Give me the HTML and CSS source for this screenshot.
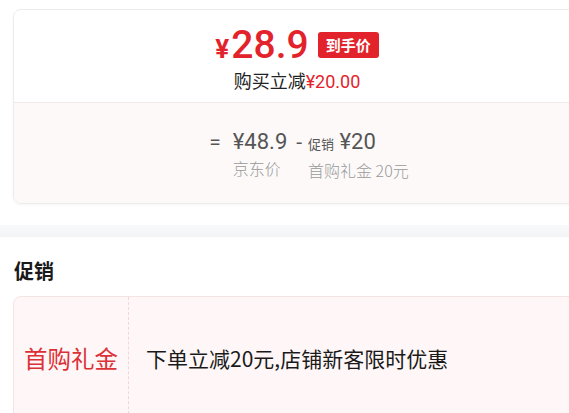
FILE: index.html
```html
<!DOCTYPE html>
<html lang="zh-CN">
<head>
    <meta charset="UTF-8">
    <meta name="viewport" content="width=device-width, initial-scale=1.0">
    <title>到手价</title>
    <link rel="stylesheet" href="styles.css">
</head>
<body>

<div class="price-card">
    <div class="price-top">
        <div class="price-row">
            <span class="yen">¥</span><span class="num">28.9</span>
            <span class="badge">到手价</span>
        </div>
        <div class="save">购买立减<span class="red">¥20.00</span></div>
    </div>
    <div class="price-calc">
        <span class="op">=</span>
        <div class="col">
            <div class="val">¥48.9</div>
            <div class="lbl">京东价</div>
        </div>
        <span class="op op-minus">-</span>
        <div class="col">
            <div class="val"><span class="tag">促销</span> ¥20</div>
            <div class="lbl">首购礼金 20元</div>
        </div>
    </div>
</div>

<div class="band"></div>

<h3 class="section-title">促销</h3>

<div class="promo">
    <div class="promo-name">首购礼金</div>
    <div class="promo-text">下单立减20元,店铺新客限时优惠</div>
</div>

</body>
</html>
```

FILE: styles.css
```css
html, body {
    margin: 0;
    padding: 0;
    overflow: hidden;
}
body {
    width: 600px;
    background-color: #fff;
    font-family: Roboto, "Noto Sans CJK SC", sans-serif;
    color: #222;
}
.price-card {
    width: 566px;
    margin: 9px 0 0 13px;
    border: 1px solid #ececec;
    border-radius: 8px;
    overflow: hidden;
    box-shadow: 0 1px 3px rgba(0, 0, 0, 0.04);
}
.price-top {
    height: 93px;
    padding-top: 15px;
    box-sizing: border-box;
    border-bottom: 1px solid #f0eaea;
}
.price-row {
    display: flex;
    justify-content: center;
    align-items: baseline;
    height: 40px;
    color: #e3232c;
}
.yen {
    font-size: 26px;
    font-weight: bold;
    margin-right: 2px;
}
.num {
    font-size: 39px;
    line-height: 40px;
    font-weight: 500;
}
.badge {
    align-self: center;
    margin-left: 9px;
    padding: 0 8px;
    height: 26px;
    line-height: 26px;
    background-color: #e3232c;
    color: #fff;
    font-size: 15px;
    font-weight: bold;
    border-radius: 3px;
    font-family: "Noto Sans CJK SC", sans-serif;
}
.save {
    margin-top: 3px;
    text-align: center;
    font-size: 18px;
    line-height: 24px;
    color: #222;
    font-family: "Noto Sans CJK SC", sans-serif;
}
.red {
    color: #e3232c;
    font-family: Roboto, sans-serif;
}
.price-calc {
    display: flex;
    justify-content: center;
    align-items: flex-start;
    height: 100px;
    padding: 25px 0 0 24px;
    box-sizing: border-box;
    background-color: #fdf9f9;
    color: #555;
}
.op {
    font-size: 21px;
    line-height: 28px;
    margin-right: 12px;
}
.op-minus {
    margin: 0 6px 0 9px;
}
.val {
    font-size: 22px;
    line-height: 28px;
    white-space: nowrap;
}
.tag {
    font-size: 13px;
    font-family: "Noto Sans CJK SC", sans-serif;
}
.lbl {
    margin-top: 1px;
    font-size: 16px;
    line-height: 22px;
    color: #999;
    white-space: nowrap;
    font-family: "Noto Sans CJK SC", sans-serif;
    font-weight: 300;
}
.band {
    height: 12px;
    margin-top: 21px;
    background: linear-gradient(#f8f9fa, #f2f4f6);
}
.section-title {
    margin: 0;
    padding: 19px 0 0 14px;
    height: 59px;
    box-sizing: border-box;
    font-size: 20px;
    line-height: 30px;
    font-weight: bold;
    color: #1a1a1a;
    font-family: "Noto Sans CJK SC", sans-serif;
}
.promo {
    display: flex;
    width: 566px;
    height: 122px;
    margin-left: 13px;
    border: 1px solid #f5e4e4;
    border-radius: 8px;
    background-color: #fff7f7;
    font-family: "Noto Sans CJK SC", sans-serif;
}
.promo-name {
    width: 114px;
    display: flex;
    align-items: center;
    justify-content: center;
    border-right: 1px dashed #f0d6d6;
    font-size: 23.5px;
    color: #dc3038;
}
.promo-text {
    display: flex;
    align-items: center;
    padding-left: 17px;
    font-size: 21px;
    color: #1a1a1a;
}
```
